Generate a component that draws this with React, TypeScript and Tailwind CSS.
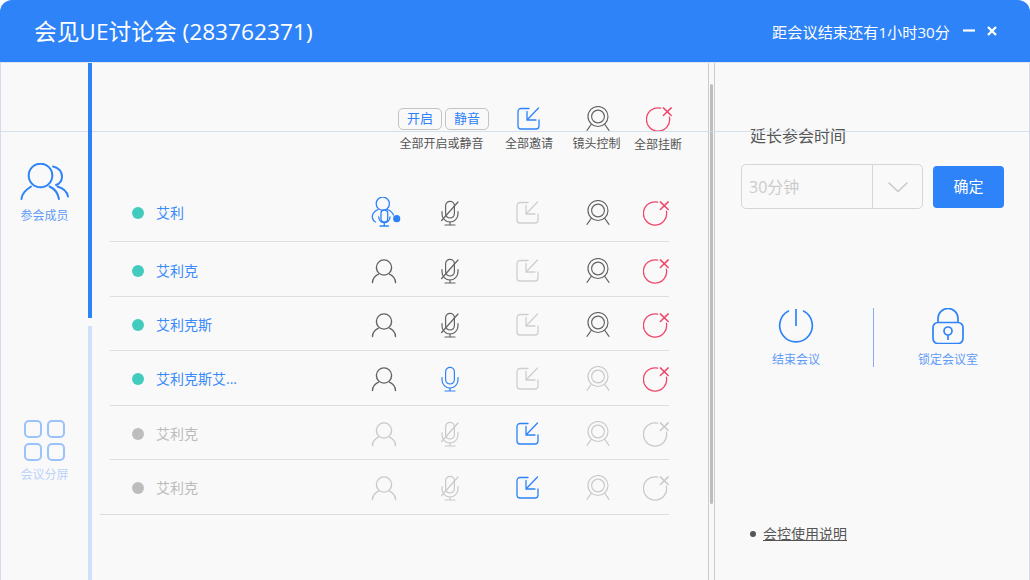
import React from "react";

const BLUE = "#2e83f9";
const RED = "#f0476a";
const DARK = "#636363";
const GRAY = "#c9c9c9";

type IP = { c: string };

function Person({ c }: IP) {
  return (
    <svg width="26" height="26" viewBox="0 0 26 26" fill="none" stroke={c} strokeWidth="1.4" strokeLinecap="round">
      <circle cx="13" cy="9.5" r="7.6" />
      <path d="M1.5 24.5C1.5 20.5 4 18 7.5 16.2" />
      <path d="M24.5 24.5C24.5 20.5 22 18 18.5 16.2" />
    </svg>
  );
}

function Mic({ c, muted }: IP & { muted?: boolean }) {
  return (
    <svg width="26" height="26" viewBox="0 0 26 26" fill="none" stroke={c} strokeWidth="1.2" strokeLinecap="round">
      <rect x="8.6" y="1.4" width="8.8" height="16.6" rx="4.4" />
      <path d="M5 11.5V14a8 8 0 0 0 16 0V11.5" />
      <path d="M13 22V25M8 25H18" />
      {muted && <path d="M4.6 20.5L21 2" />}
    </svg>
  );
}

function MicPerson() {
  return (
    <svg width="32" height="32" viewBox="0 0 32 32" fill="none" stroke={BLUE} strokeWidth="1.3" strokeLinecap="round">
      <circle cx="11.8" cy="6.7" r="6.6" />
      <path d="M7 12.5C3 14.5 0.8 18 1.5 21C2 23.5 3 24.5 4.5 25" />
      <path d="M16.5 12.5C19 13.5 21.5 15.5 22.5 18" />
      <rect x="10" y="13" width="6.7" height="12" rx="3.35" />
      <path d="M7.7 20a5.65 5.65 0 0 0 11.3 0" />
      <path d="M13.3 25.8V29M9 29H17.5" />
      <circle cx="25.7" cy="21.7" r="3.6" fill={BLUE} stroke="none" />
    </svg>
  );
}

function Invite({ c }: IP) {
  return (
    <svg width="24" height="24" viewBox="0 0 24 24" fill="none" stroke={c} strokeWidth="1.3" strokeLinecap="round">
      <path d="M12 1.5H4a3 3 0 0 0-3 3V19a3 3 0 0 0 3 3H19a3 3 0 0 0 3-3V13" />
      <path d="M21.5 1L10 13M10 4.5V13H19" />
    </svg>
  );
}

function Cam({ c }: IP) {
  return (
    <svg width="26" height="26" viewBox="0 0 26 26" fill="none" stroke={c} strokeWidth="1.15" strokeLinecap="round">
      <circle cx="13" cy="10.5" r="10" />
      <circle cx="13" cy="10.5" r="6.4" />
      <path d="M6.5 18C5 20 3.5 22.5 2 24.4M19.5 18C21 20 22.5 22.5 24 24.4" />
    </svg>
  );
}

function Hangup({ c }: IP) {
  return (
    <svg className="shrink-0" width="30" height="26" viewBox="0 0 30 26" fill="none" stroke={c} strokeWidth="1.3" strokeLinecap="round">
      <path d="M14.7 2.2A11.6 11.6 0 1 0 23.4 11.2" />
      <path d="M17.4 1.9L25.2 9.5M25.2 1.9L17.4 9.5" strokeWidth="1.5" />
    </svg>
  );
}

type RowData = {
  name: string;
  online: boolean;
  h: string;
  first?: boolean;
  last?: boolean;
  micOn?: boolean;
  inviteOn?: boolean;
  camOff?: boolean;
};

const rows: RowData[] = [
  { name: "艾利", online: true, h: "h-[55px] pb-[2px]", first: true },
  { name: "艾利克", online: true, h: "h-[55px] pt-[3px]" },
  { name: "艾利克斯", online: true, h: "h-[54px] pt-[3px]" },
  { name: "艾利克斯艾...", online: true, h: "h-[55px] pt-[2px]", micOn: true, camOff: true },
  { name: "艾利克", online: false, h: "h-[54px] pt-[2px]", inviteOn: true },
  { name: "艾利克", online: false, h: "h-[55px] pt-[2px]", inviteOn: true, last: true },
];

function Row({ r }: { r: RowData }) {
  const main = r.online ? DARK : GRAY;
  return (
    <div className={`flex items-center border-b border-[#dddddd] ${r.h} ${r.last ? "ml-[8px] pl-[10px]" : "ml-[18px]"} mr-[39px]`}>
      <div className="w-[244px] shrink-0 flex items-center pl-[22px]">
        <span className={`w-[12px] h-[12px] rounded-full ${r.online ? "bg-[#43cbbf]" : "bg-[#bdbdbd]"}`} />
        <span className={`ml-[12px] text-[14px] leading-[20px] ${r.online ? "text-[#3a8af9]" : "text-[#bbbbbb]"}`}>{r.name}</span>
      </div>
      <div className="w-[60px] shrink-0 flex justify-center">
        {r.first ? <span className="ml-[6px]"><MicPerson /></span> : <Person c={main} />}
      </div>
      <div className="w-[72px] shrink-0 flex justify-center">
        {r.micOn ? <Mic c={BLUE} /> : <Mic c={main} muted />}
      </div>
      <div className="w-[84px] shrink-0 flex justify-center">
        <Invite c={r.inviteOn ? BLUE : "#cfcfcf"} />
      </div>
      <div className="w-[56px] shrink-0 flex justify-center">
        <Cam c={r.camOff || !r.online ? GRAY : DARK} />
      </div>
      <div className="w-[43px] shrink-0 pl-[17px] flex">
        <Hangup c={r.online ? RED : GRAY} />
      </div>
    </div>
  );
}

function ToolCol({ w, label, children, labelClass, iconClass }: { w: string; label: string; children: React.ReactNode; labelClass?: string; iconClass?: string }) {
  return (
    <div className={`${w} shrink-0 flex flex-col items-center`}>
      <div className={`h-[24px] flex items-center justify-center ${iconClass ?? ""}`}>{children}</div>
      <div className={`mt-[4px] text-[12px] leading-[18px] text-[#555555] whitespace-nowrap ${labelClass ?? ""}`}>{label}</div>
    </div>
  );
}

export default function App() {
  return (
    <div
      className="relative w-[1030px] h-[580px] overflow-hidden bg-white rounded-t-[12px] flex flex-col"
      style={{ fontFamily: '"Open Sans", "Noto Sans CJK SC", sans-serif' }}
    >
      <header className="h-[62px] shrink-0 bg-[#2e83f9] flex items-center pl-[34px] pr-[33px] text-white">
        <h1 className="text-[22.7px] leading-[30px] font-normal translate-y-[1px]">会见UE讨论会 (283762371)</h1>
        <span className="ml-auto text-[15.2px] leading-[22px] translate-y-[1px]">距会议结束还有1小时30分</span>
        <svg className="ml-[13px]" width="12" height="12" viewBox="0 0 12 12" fill="none" stroke="#fff" strokeWidth="2.2">
          <path d="M0 5.5H12" />
        </svg>
        <svg className="ml-[12px]" width="10" height="10" viewBox="0 0 10 10" fill="none" stroke="#fff" strokeWidth="2.4">
          <path d="M1 1L9 9M9 1L1 9" />
        </svg>
      </header>

      <div className="flex-1 flex bg-[#f9f9f9] border-l border-r border-t border-[#d4dcec] border-t-[#dfe6f2] min-h-0">
        {/* sidebar */}
        <aside className="w-[87px] shrink-0 flex flex-col items-center">
          <div className="mt-[100px] flex flex-col items-center">
            <svg width="50" height="38" viewBox="0 0 50 38" fill="none" stroke={BLUE} strokeWidth="2" strokeLinecap="round">
              <circle cx="20.5" cy="12.5" r="11.8" />
              <path d="M1.5 36C2 30 6 27 11 23.5" />
              <path d="M29.5 23.5C34 25.5 38 30 39 36" />
              <path d="M33 3.5C39 4.5 42 9 42 13.5C42 18 39 21 36 22" />
              <path d="M37.5 23.5C43 25 47 29 48 33.5" />
            </svg>
            <span className="mt-[6px] text-[12px] leading-[18px] text-[#5f9bf7]">参会成员</span>
          </div>
          <div className="mt-[195px] flex flex-col items-center">
            <div className="grid grid-cols-2 gap-[5px]">
              <span className="w-[18px] h-[18px] rounded-[5px] border-2 border-[#9cc2fb]" />
              <span className="w-[18px] h-[18px] rounded-[5px] border-2 border-[#9cc2fb]" />
              <span className="w-[18px] h-[18px] rounded-[5px] border-2 border-[#9cc2fb]" />
              <span className="w-[18px] h-[18px] rounded-[5px] border-2 border-[#9cc2fb]" />
            </div>
            <span className="mt-[5px] text-[12px] leading-[18px] text-[#bcd4f9]">会议分屏</span>
          </div>
        </aside>

        {/* tab bar */}
        <div className="relative z-10 w-[4px] shrink-0 flex flex-col">
          <div className="h-[255px] bg-[#2e83f9]" />
          <div className="mt-[8px] flex-1 bg-[#cfe0fa]" />
        </div>

        {/* main */}
        <main className="w-[616px] shrink-0 flex flex-col">
          <div className="pt-[44px] pl-[306px] flex">
            <ToolCol w="w-[91px]" label="全部开启或静音" labelClass="-translate-x-[2px]">
              <div className="flex gap-[3px]">
                <span className="w-[44px] h-[22px] rounded-[5px] border border-[#c4c4c4] flex items-center justify-center text-[13px] text-[#2e83f9]">开启</span>
                <span className="w-[44px] h-[22px] rounded-[5px] border border-[#c4c4c4] flex items-center justify-center text-[13px] text-[#2e83f9]">静音</span>
              </div>
            </ToolCol>
            <ToolCol w="w-[80px]" label="全部邀请">
              <Invite c={BLUE} />
            </ToolCol>
            <ToolCol w="w-[57px]" label="镜头控制" labelClass="-translate-x-[1px]">
              <Cam c={DARK} />
            </ToolCol>
            <ToolCol w="w-[64px]" label="全部挂断" labelClass="translate-y-[1px]" iconClass="ml-[5px]">
              <Hangup c={RED} />
            </ToolCol>
          </div>
          <div className="mt-[34px]">
            {rows.map((r, i) => (
              <Row key={i} r={r} />
            ))}
          </div>
        </main>

        {/* scroll track */}
        <div className="w-[7px] shrink-0 border-l border-r border-[#cccccc] pl-[1px] pr-[1px]">
          <div className="mt-[21px] h-[420px] bg-[#bdbdbd] rounded-full" />
        </div>

        {/* right */}
        <section className="flex-1 flex flex-col">
          <div className="pl-[35px] pt-[61px] text-[16px] leading-[24px] text-[#555555]">延长参会时间</div>
          <div className="mt-[16px] ml-[26px] flex items-center">
            <div className="w-[182px] h-[45px] rounded-[5px] border border-[#d6d6d6] flex">
              <div className="flex-1 pl-[7px] flex items-center text-[16px] text-[#cccccc]">30分钟</div>
              <div className="w-[50px] border-l border-[#d6d6d6] flex items-center justify-center">
                <svg width="22" height="12" viewBox="0 0 22 12" fill="none" stroke="#c9c9c9" strokeWidth="1.5">
                  <path d="M1.5 1.5L11 10.5L20.5 1.5" />
                </svg>
              </div>
            </div>
            <button className="ml-[10px] w-[71px] h-[42px] rounded-[4px] bg-[#2e83f9] text-white text-[15px]">确定</button>
          </div>
          <div className="mt-[99px] flex">
            <div className="ml-[41px] w-[80px] flex flex-col items-center">
              <svg width="36" height="36" viewBox="0 0 36 36" fill="none" stroke={BLUE} strokeWidth="1.7">
                <path d="M11 2.8A16.3 16.3 0 1 0 25 2.8" />
                <path d="M18 1V18" />
              </svg>
              <span className="mt-[7px] text-[12px] leading-[18px] text-[#5f9bf7]">结束会议</span>
            </div>
            <div className="ml-[37px] w-px h-[59px] bg-[#85aef0]" />
            <div className="ml-[34px] w-[80px] flex flex-col items-center">
              <svg width="34" height="36" viewBox="0 0 34 36" fill="none" stroke={BLUE} strokeWidth="1.7">
                <path d="M7 15V10.5a10 10 0 0 1 20 0V15" />
                <rect x="2" y="14.5" width="30" height="21" rx="5" />
                <circle cx="17" cy="23" r="4" />
                <path d="M17 27V32" />
              </svg>
              <span className="mt-[7px] text-[12px] leading-[18px] text-[#5f9bf7] whitespace-nowrap">锁定会议室</span>
            </div>
          </div>
          <div className="mt-[155px] ml-[35px] flex items-center">
            <span className="w-[6px] h-[6px] rounded-full bg-[#555555]" />
            <span className="ml-[7px] text-[14px] leading-[20px] text-[#555555] underline">会控使用说明</span>
          </div>
        </section>
      </div>

      {/* hairline lying over the panels */}
      <div className="absolute left-0 right-0 top-[131px] h-px bg-[#d4dcea]/90" />
    </div>
  );
}
